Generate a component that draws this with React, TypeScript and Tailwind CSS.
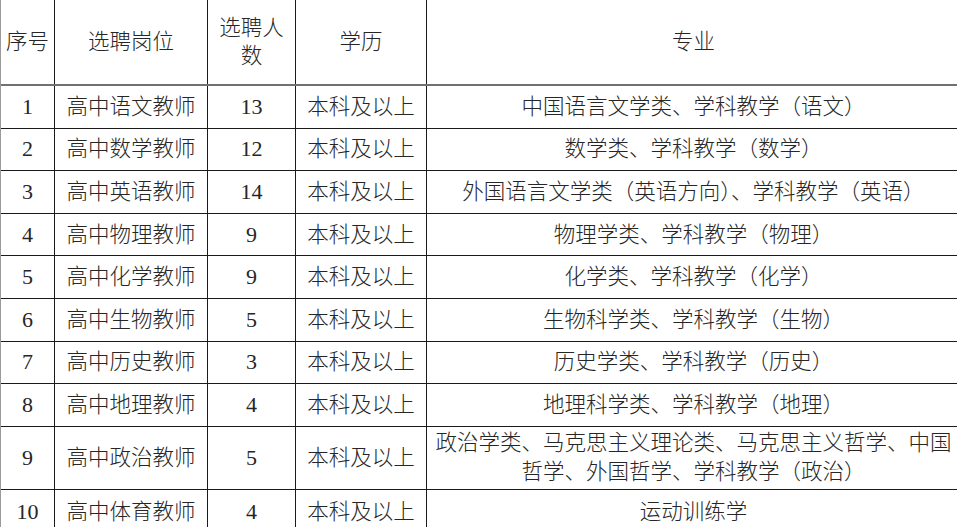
const ROWS = [
  ['1', '高中语文教师', '13', '中国语言文学类、学科教学（语文）'],
  ['2', '高中数学教师', '12', '数学类、学科教学（数学）'],
  ['3', '高中英语教师', '14', '外国语言文学类（英语方向）、学科教学（英语）'],
  ['4', '高中物理教师', '9', '物理学类、学科教学（物理）'],
  ['5', '高中化学教师', '9', '化学类、学科教学（化学）'],
  ['6', '高中生物教师', '5', '生物科学类、学科教学（生物）'],
  ['7', '高中历史教师', '3', '历史学类、学科教学（历史）'],
  ['8', '高中地理教师', '4', '地理科学类、学科教学（地理）'],
]

const cell = 'flex items-center justify-center text-center border-r border-[#1a1a1a]'

function Row({ cols, h, last }: { cols: React.ReactNode[]; h: string; last?: boolean }) {
  return (
    <div className={`flex ${h} ${last ? '' : 'border-b border-[#1a1a1a]'}`}>
      <div className={`${cell} w-[54px] shrink-0 text-[22px]`}>{cols[0]}</div>
      <div className={`${cell} w-[153px] shrink-0`}>{cols[1]}</div>
      <div className={`${cell} w-[88px] shrink-0 text-[22px]`}>{cols[2]}</div>
      <div className={`${cell} w-[131px] shrink-0`}>{cols[3]}</div>
      <div className="flex flex-1 items-center justify-center text-center">{cols[4]}</div>
    </div>
  )
}

export default function App() {
  return (
    <div
      className="w-[957px] h-[527px] overflow-hidden bg-white text-[#262626] text-[21.5px] leading-[28px] font-light"
      style={{ fontFamily: '"Liberation Serif", "Noto Sans CJK SC", serif' }}
    >
      <div className="border-l border-[#9a9a9a] w-[960px]">
        <div className="flex h-[86px] border-b-2 border-[#707070]">
          <div className={`${cell} w-[54px] shrink-0`}>序号</div>
          <div className={`${cell} w-[153px] shrink-0`}>选聘岗位</div>
          <div className={`${cell} w-[88px] shrink-0 flex-col`}>
            <span>选聘人</span>
            <span>数</span>
          </div>
          <div className={`${cell} w-[131px] shrink-0`}>学历</div>
          <div className="flex flex-1 items-center justify-center">专业</div>
        </div>
        {ROWS.map((r) => (
          <Row key={r[0]} h="h-[42.6px]" cols={[r[0], r[1], r[2], '本科及以上', r[3]]} />
        ))}
        <Row
          h="h-[63px]"
          cols={[
            '9',
            '高中政治教师',
            '5',
            '本科及以上',
            <div className="flex flex-col items-center leading-[29px]">
              <span>政治学类、马克思主义理论类、马克思主义哲学、中国</span>
              <span>哲学、外国哲学、学科教学（政治）</span>
            </div>,
          ]}
        />
        <Row h="h-[44px]" last cols={['10', '高中体育教师', '4', '本科及以上', '运动训练学']} />
      </div>
    </div>
  )
}
